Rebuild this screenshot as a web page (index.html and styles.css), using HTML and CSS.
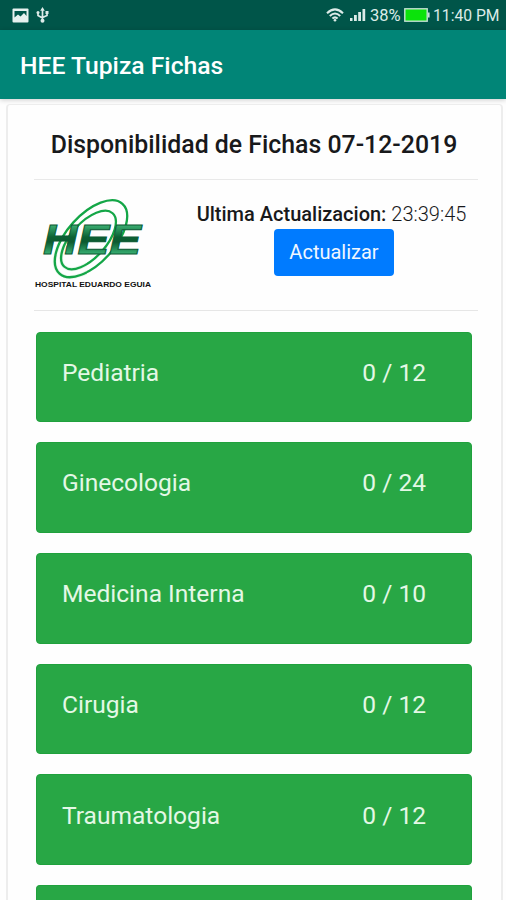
FILE: index.html
```html
<!DOCTYPE html>
<html lang="es">
<head>
<meta charset="utf-8">
<title>HEE Tupiza Fichas</title>
<link rel="stylesheet" href="styles.css">
</head>
<body>
<div class="status">
  <svg class="ico-image" width="17" height="15" viewBox="0 0 17 15"><rect x=".5" y=".5" width="16" height="14" rx="1" fill="#e6f1ef"/><path d="M2.500 3h12v5l-2.500-3-3.500 3.500-2.500-2-3.500 3z" fill="#00564a"/></svg>
  <svg class="ico-usb" width="13" height="16" viewBox="0 0 13 16" fill="none" stroke="#dcebe8" stroke-width="1.700"><path d="M6.500 2v11M6.500 11L2 8.500V5.500M6.500 10.500L11 8.500V5"/><path d="M4.200 3.800L6.500 0l2.300 3.800zM9.500 4h3v3h-3z" fill="#dcebe8" stroke="none"/><circle cx="2" cy="5.500" r="1.500" fill="#dcebe8" stroke="none"/><circle cx="6.500" cy="13.800" r="2" fill="#dcebe8" stroke="none"/></svg>
  <svg class="ico-wifi" width="18" height="14" viewBox="0 0 18 14" fill="none" stroke="#dcebe8" stroke-width="2"><path d="M1 5.200Q9-2.500 17 5.200M3.800 8Q9 3 14.200 8M6.400 10.600Q9 8.200 11.600 10.600"/><circle cx="9" cy="12.300" r="1.300" fill="#dcebe8" stroke="none"/></svg>
  <svg class="ico-signal" width="17" height="14" viewBox="0 0 17 14" fill="#dcebe8"><path d="M1 10h2.500v3H1zM5 7h2.800v6H5zM9.200 4h2.800v9H9.200zM13.500 1h2.700v12h-2.700z"/></svg>
  <span class="percent">38%</span>
  <svg class="ico-battery" width="26" height="14" viewBox="0 0 26 14"><rect x=".8" y=".8" width="22.400" height="12.400" fill="#0be30b" stroke="#c5e0d6" stroke-width="1.400"/><path d="M24 4.500h1.600v5H24z" fill="#c5e0d6"/></svg>
  <span class="clock">11:40 PM</span>
</div>
<header class="appbar"><h1>HEE Tupiza Fichas</h1></header>
<main class="card">
  <h2 class="title">Disponibilidad de Fichas 07-12-2019</h2>
  <section class="info">
    <svg class="logo" width="140" height="110" viewBox="0 0 140 110">
      <defs>
        <linearGradient id="metal" gradientUnits="userSpaceOnUse" x1="0" y1="34" x2="0" y2="65"><stop offset="0" stop-color="#3fb577"/><stop offset=".42" stop-color="#0c6134"/><stop offset=".58" stop-color="#0c5a30"/><stop offset="1" stop-color="#3cb878"/></linearGradient>
        <clipPath id="front"><path d="M0 54H62V110H0z"/></clipPath>
        <g id="rings">
          <ellipse cx="66" cy="48.700" rx="47" ry="24" transform="rotate(-48 66 48.700)"/>
          <ellipse cx="63.500" cy="50" rx="36" ry="17.500" transform="rotate(-48 63.500 50)"/>
        </g>
      </defs>
      <use href="#rings" fill="none" stroke="#14a647" stroke-width="2.300"/>
      <text class="logo-letters" x="18" y="64" textLength="98" lengthAdjust="spacingAndGlyphs" fill="url(#metal)">HEE</text>
      <g clip-path="url(#front)" fill="none">
        <use href="#rings" stroke="#e8f8ec" stroke-width="4"/>
        <use href="#rings" stroke="#14a647" stroke-width="2.300"/>
      </g>
      <text class="logo-name" x="10" y="96.500" textLength="116" lengthAdjust="spacingAndGlyphs">HOSPITAL EDUARDO EGUIA</text>
    </svg>
    <div class="update">
      <p><b>Ultima Actualizacion:</b> <span>23:39:45</span></p>
      <button>Actualizar</button>
    </div>
  </section>
  <ul class="list">
    <li><span>Pediatria</span><span class="count">0 / 12</span></li>
    <li><span>Ginecologia</span><span class="count">0 / 24</span></li>
    <li><span>Medicina Interna</span><span class="count">0 / 10</span></li>
    <li><span>Cirugia</span><span class="count">0 / 12</span></li>
    <li><span>Traumatologia</span><span class="count">0 / 12</span></li>
    <li class="partial"></li>
  </ul>
</main>
</body>
</html>
```

FILE: styles.css
```css
* { box-sizing: border-box; }
body { margin: 0; background: #fefefe; color: #18191b; font-family: Roboto, "Liberation Sans", sans-serif; }
h1, h2, p, ul { margin: 0; padding: 0; }
svg { display: block; flex: none; }

.status { display: flex; align-items: center; height: 30px; padding: 0 7px 0 12px; background: #005549; color: #dcebe8; font-size: 16px; white-space: nowrap; }
.ico-usb { margin-left: 7px; }
.ico-wifi { margin-left: auto; }
.ico-signal { margin-left: 5px; }
.percent { width: 32px; margin-left: 4px; padding-top: 1px; font-size: 16.500px; }
.ico-battery { margin-left: 2px; }
.clock { width: 66px; margin-left: 3px; padding-top: 1px; font-size: 15.700px; }

.appbar { display: flex; align-items: center; height: 69px; padding: 3px 20px 0; background: #018577; box-shadow: 0 1px 5px rgba(0, 0, 0, .2); }
.appbar h1 { color: #fff; font-size: 24.700px; font-weight: 500; line-height: 30px; }

.card { width: 497px; height: 796px; margin: 5px 0 0 6px; padding: 0 23px 0 26px; border: 1px solid #ededed; border-width: 1px 2px 0; border-radius: 4px 4px 0 0; background: #fefefe; overflow: hidden; }
.title { height: 75px; padding: 24px 4px 0 0; border-bottom: 1px solid #e9e9e9; font-size: 24.850px; font-weight: 500; line-height: 31px; text-align: center; white-space: nowrap; }
.info { display: flex; height: 131px; padding-top: 10px; border-bottom: 1px solid #e6e6e6; }
.logo { margin-left: -9px; }
.logo-letters { font: italic bold 43px "Liberation Sans", sans-serif; stroke: #0b5b34; stroke-width: 1px; }
.logo-name { font: bold 8px "Liberation Sans", sans-serif; fill: #111; }
.update { flex: 1; padding: 11px 0 0 25px; text-align: center; }
.update p { margin-left: -5px; font-size: 20px; line-height: 27px; white-space: nowrap; }
.update b { font-weight: 500; }
.update p span { font-weight: 300; }
.update button { width: 120px; height: 47px; margin-top: 1px; padding: 0 0 2px; border: 0; border-radius: 4px; background: #007bff; color: #f0f7ff; font: 20px Roboto, sans-serif; }

.list { display: flex; flex-direction: column; gap: 20px; padding: 20.500px 6px 0 2px; list-style: none; }
.list li { display: flex; flex: none; justify-content: space-between; height: 90.700px; padding: 25.300px 45px 0 25px; border: 1px solid #20a13d; border-radius: 4px; background: #28a745; color: #e4f8e6; font-size: 24.550px; line-height: 30px; }
.list .partial { height: 16px; border-bottom: 0; border-radius: 4px 4px 0 0; }
```
